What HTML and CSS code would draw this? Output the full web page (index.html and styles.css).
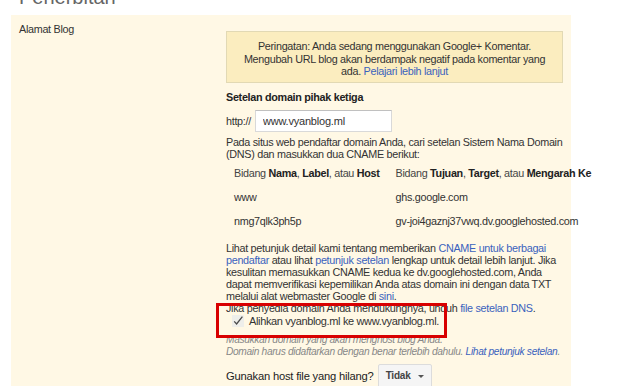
FILE: index.html
```html
<!DOCTYPE html>
<html lang="id">
<head>
  <meta charset="UTF-8" />
  <title>Penerbitan</title>
  <link rel="stylesheet" href="styles.css">
</head>
<body>
  <h2 class="page-title">Penerbitan</h2>

  <div class="panel">
    <div class="label">Alamat Blog</div>

    <div class="content">
      <div class="warning">
        Peringatan: Anda sedang menggunakan Google+ Komentar.<br>
        Mengubah URL blog akan berdampak negatif pada komentar yang<br>
        ada. <a href="#">Pelajari lebih lanjut</a>
      </div>

      <div class="section-title">Setelan domain pihak ketiga</div>

      <div class="url-row">
        <span>http://</span>
        <input type="text" value="www.vyanblog.ml" />
      </div>

      <p class="text">
        Pada situs web pendaftar domain Anda, cari setelan Sistem Nama Domain<br>
        (DNS) dan masukkan dua CNAME berikut:
      </p>

      <table class="cname">
        <tr class="head">
          <td class="col-host">Bidang <b>Nama</b>, <b>Label</b>, atau <b>Host</b></td>
          <td>Bidang <b>Tujuan</b>, <b>Target</b>, atau <b>Mengarah Ke</b></td>
        </tr>
        <tr>
          <td class="col-host">www</td>
          <td>ghs.google.com</td>
        </tr>
        <tr>
          <td class="col-host">nmg7qlk3ph5p</td>
          <td>gv-joi4gaznj37vwq.dv.googlehosted.com</td>
        </tr>
      </table>

      <p class="text help">
        Lihat petunjuk detail kami tentang memberikan <a href="#">CNAME untuk berbagai<br>
        pendaftar</a> atau lihat <a href="#">petunjuk setelan</a> lengkap untuk detail lebih lanjut. Jika<br>
        kesulitan memasukkan CNAME kedua ke dv.googlehosted.com, Anda<br>
        dapat memverifikasi kepemilikan Anda atas domain ini dengan data TXT<br>
        melalui alat webmaster Google di <a href="#">sini</a>.<br>
        Jika penyedia domain Anda mendukungnya, unduh <a href="#">file setelan DNS</a>.
      </p>

      <label class="redirect">
        <span class="check">
          <svg width="12" height="12" viewBox="0 0 12 12">
            <rect x="0" y="0" width="12" height="12" fill="#eeeeea"/>
            <path d="M2.2 6.4 L4.6 8.9 L10.4 1.6" fill="none" stroke="#4a4a4a" stroke-width="1.3"/>
          </svg>
        </span>
        Alihkan vyanblog.ml ke www.vyanblog.ml.
      </label>

      <div class="hint">
        Masukkan domain yang akan menghost blog Anda.<br>
        Domain harus didaftarkan dengan benar terlebih dahulu. <a href="#">Lihat petunjuk setelan</a>.
      </div>

      <div class="missing">
        <span class="missing-label">Gunakan host file yang hilang?</span>
        <button class="dropdown">Tidak <span class="caret"></span></button>
      </div>
    </div>
  </div>

  <div class="annotation"></div>
</body>
</html>
```

FILE: styles.css
```css
body {
  font-family: "Liberation Sans", Arial, sans-serif;
  font-size: 10.8px;
  letter-spacing: -0.3px;
  color: #333;
  background-color: white;
  margin: 0;
  padding: 0;
  overflow: hidden;
}
a {
  color: #3a62bd;
  text-decoration: none;
}
.page-title {
  font-size: 20px;
  font-weight: normal;
  line-height: 20px;
  letter-spacing: 0;
  color: #666;
  margin: -13px 0 0 19px;
}
.panel {
  display: grid;
  grid-template-columns: 215px 337px;
  width: 560px;
  height: 371px;
  margin: 8px 0 0 11px;
  background-color: #fff8e5;
}
.label {
  padding: 8px 0 0 8px;
  line-height: 12px;
}
.content {
  padding-top: 16px;
  line-height: 12px;
  white-space: nowrap;
}
.warning {
  background-color: #fbedbf;
  border: 1px solid #e2d9b4;
  text-align: center;
  line-height: 12.5px;
  padding: 8px 10px 4px;
}
.section-title {
  font-weight: bold;
  color: #222;
  margin-top: 8px;
}
.url-row {
  display: flex;
  align-items: center;
  gap: 4px;
  margin-top: 7px;
}
.url-row input {
  width: 137px;
  height: 22px;
  box-sizing: border-box;
  border: 1px solid #d9d9d9;
  border-top-color: #c0c0c0;
  font-family: inherit;
  font-size: 11px;
  letter-spacing: -0.2px;
  color: #333;
  padding: 0 7px;
  margin: 0;
}
.text {
  margin: 4px 0 0 0;
}
.cname {
  border-collapse: collapse;
  margin-top: 1px;
}
.cname td {
  padding: 6px 8px;
  line-height: 12px;
}
.cname .head td {
  color: #444;
}
.cname b {
  color: #222;
}
.cname .col-host {
  width: 138px;
}
.help {
  margin-top: 9px;
}
.redirect {
  display: flex;
  align-items: center;
  gap: 5px;
  padding-left: 6px;
  margin-top: 1px;
  font-size: 11px;
  letter-spacing: -0.35px;
}
.check svg {
  display: block;
}
.hint {
  margin-top: 7px;
  font-size: 10.2px;
  letter-spacing: -0.33px;
  font-style: italic;
  color: #888;
}
.missing {
  display: flex;
  align-items: center;
  gap: 4px;
  margin-top: 6px;
}
.missing-label {
  font-size: 11.2px;
  letter-spacing: -0.2px;
  color: #222;
}
.dropdown {
  background-color: #f5f5f5;
  border: 1px solid #dcdcdc;
  border-radius: 2px;
  font-family: inherit;
  font-size: 10px;
  font-weight: bold;
  letter-spacing: -0.2px;
  color: #444;
  height: 24px;
  padding: 0 7px;
}
.caret {
  display: inline-block;
  margin-left: 5px;
  border-left: 3px solid transparent;
  border-right: 3px solid transparent;
  border-top: 3px solid #555;
  vertical-align: middle;
}
.annotation {
  position: absolute;
  left: 216px;
  top: 303px;
  width: 225px;
  height: 29px;
  border: 3px solid #d80000;
}
```
